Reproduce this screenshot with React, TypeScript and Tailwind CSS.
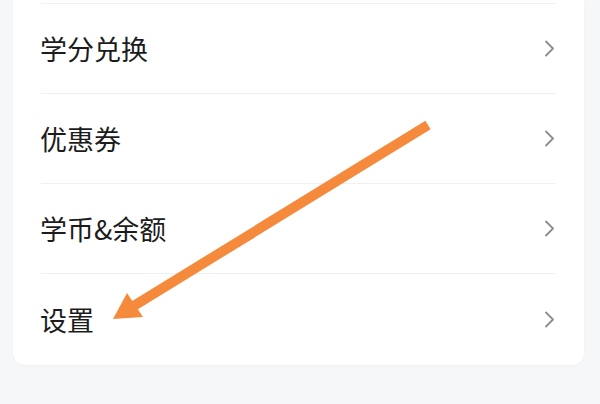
const rows = ["学分兑换", "优惠券", "学币&余额", "设置"];

const Chevron = () => (
  <svg width="11" height="17" viewBox="0 0 11 17" fill="none" className="shrink-0">
    <polyline
      points="2,1.5 9,8.5 2,15.5"
      stroke="#8c8c8c"
      strokeWidth="1.8"
      strokeLinecap="round"
      strokeLinejoin="round"
    />
  </svg>
);

const App = () => {
  return (
    <div className="relative w-[600px] h-[404px] overflow-hidden bg-[#f6f7f9] font-['Noto_Sans_CJK_SC','Noto_Sans',sans-serif]">
      {/* menu card */}
      <div className="ml-[13px] w-[571px] bg-white rounded-b-[12px] shadow-[0_1px_3px_rgba(0,0,0,0.03)]">
        <div className="mx-[28px] h-[4px] border-b border-[#f0f0f0]" />
        {rows.map((label, i) => (
          <div
            key={label}
            className={`mx-[28px] h-[90px] flex items-center justify-between pr-[1px] ${
              i < rows.length - 1 ? "border-b border-[#f0f0f0]" : "h-[91px]"
            }`}
          >
            <span className="text-[27px] leading-none text-[#1c1c1c] -ml-[1px]">{label}</span>
            <Chevron />
          </div>
        ))}
      </div>

      {/* orange annotation arrow */}
      <svg className="absolute inset-0 pointer-events-none" width="600" height="404" viewBox="0 0 600 404">
        <line x1="428" y1="125" x2="132" y2="307" stroke="#f58a3c" strokeWidth="10" />
        <polygon points="113,319 127,293 143,317" fill="#f58a3c" />
      </svg>
    </div>
  );
};

export default App;
